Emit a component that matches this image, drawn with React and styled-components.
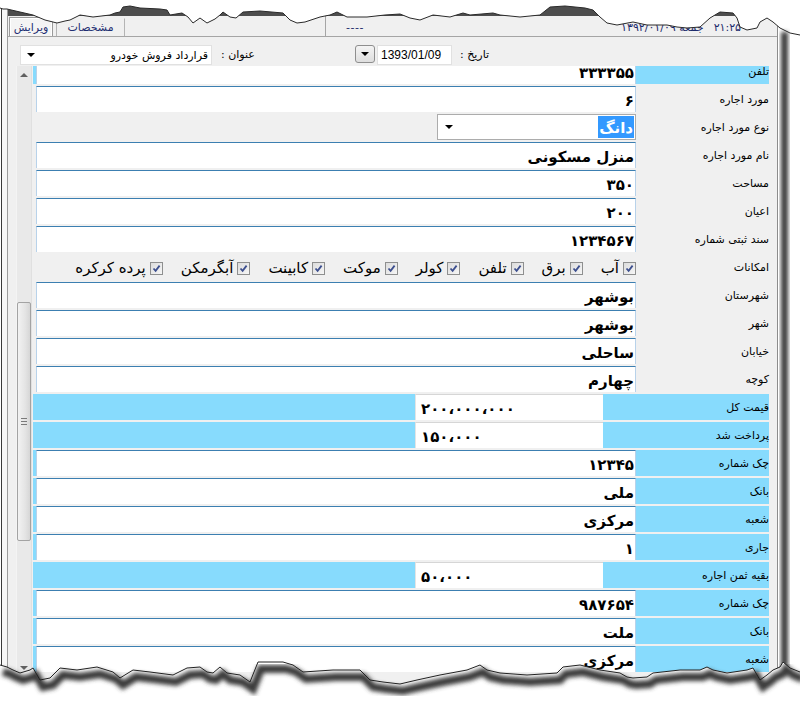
import React from 'react';
import styled, { createGlobalStyle } from 'styled-components';

const GlobalStyle = createGlobalStyle`
  html, body { margin: 0; padding: 0; background: #fff; }
  body { width: 800px; height: 708px; overflow: hidden; font-family: "DejaVu Sans", "Noto Sans", sans-serif; }
  * { box-sizing: border-box; }
`;

const Page = styled.div`
  position: relative;
  width: 800px;
  height: 708px;
  overflow: hidden;
  background: #fff;
`;

const Frame = styled.div`
  margin-left: 1px;
  width: 777px;
  height: 708px;
  border-left: 1px solid #3a3a3a;
  border-right: 1px solid #8c8c8c;
  padding-left: 5px;
  background: #f7f7f7;
  display: flex;
`;

const Inner = styled.div`
  flex: 1;
  border-left: 1px solid #9c9c9c;
  background: #f0f0f0;
  display: flex;
  flex-direction: column;
  min-width: 0;
`;

const TitleBar = styled.div`
  height: 16px;
  flex: none;
  background: #4d4d4d;
`;

const Header = styled.div`
  height: 21px;
  flex: none;
  display: flex;
  border-bottom: 1px solid #a5a5a5;
`;

const Tabs = styled.div`
  width: 317px;
  display: flex;
  align-items: flex-end;
`;

const Tab = styled.div`
  height: ${p => (p.$active ? '19px' : '18px')};
  width: ${p => p.$w}px;
  margin-left: ${p => p.$ml}px;
  font-size: 11px;
  color: #1f2f72;
  display: flex;
  align-items: center;
  justify-content: center;
  direction: rtl;
  border: 1px solid ${p => (p.$active ? '#9a9a9a' : 'transparent')};
  border-left-color: ${p => (p.$active ? '#9a9a9a' : '#b4b4b4')};
  border-right-color: ${p => (p.$active ? '#9a9a9a' : '#b4b4b4')};
  border-bottom: none;
  box-shadow: ${p => (p.$active ? 'inset 1px 1px 0 #fff, inset -1px 0 0 #fff' : 'none')};
  background: ${p => (p.$active ? '#f4f4f4' : 'transparent')};
`;

const Status = styled.div`
  flex: 1;
  border-left: 1px solid #a5a5a5;
  display: flex;
  align-items: center;
  padding-left: 20px;
  padding-right: 36px;
  padding-top: 3px;
  color: #1b2a6b;
  font-size: 11px;
`;

const Dash = styled.span`
  letter-spacing: 0.5px;
`;

const Clock = styled.div`
  margin-left: auto;
  display: flex;
  align-items: center;
  gap: 10px;
  direction: ltr;
`;

const Toolbar = styled.div`
  height: 29px;
  flex: none;
  display: grid;
  grid-template-columns: 12px 192px 143px 20px 2px 75px 8px 1fr;
  align-items: start;
  padding-top: 8px;
  font-size: 11px;
`;

const TitleCombo = styled.div`
  grid-column: 2;
  height: 20px;
  background: #fff;
  border: 1px solid #e1e1e1;
  display: flex;
  align-items: center;
  padding: 0 3px 0 6px;
`;

const ComboText = styled.span`
  margin-left: auto;
  direction: rtl;
  color: #000;
`;

const Arrow = styled.span`
  width: 0;
  height: 0;
  border-left: 4px solid transparent;
  border-right: 4px solid transparent;
  border-top: 4px solid ${p => p.$color || '#000'};
  flex: none;
`;

const ToolLabel = styled.span`
  grid-column: ${p => p.$col};
  direction: rtl;
  justify-self: start;
  padding-left: ${p => p.$pl || 0}px;
  line-height: 20px;
  color: #000;
  white-space: nowrap;
`;

const DateButton = styled.div`
  grid-column: 4;
  height: 18px;
  border: 1px solid #8e8e8e;
  border-radius: 3px;
  background: linear-gradient(#f4f4f4, #dedede);
  display: flex;
  align-items: center;
  justify-content: center;
`;

const DateBox = styled.div`
  grid-column: 6;
  height: 20px;
  background: #fff;
  border: 1px solid #e1e1e1;
  font-family: "Liberation Sans", Arial, sans-serif;
  font-size: 12px;
  line-height: 18px;
  padding-left: 3px;
  color: #000;
`;

const ScrollArea = styled.div`
  height: 610px;
  flex: none;
  display: flex;
  padding-left: 8px;
  overflow: hidden;
`;

const ScrollBar = styled.div`
  width: 16px;
  flex: none;
  background: #e9e9e9;
  border-left: 1px solid #f4f4f4;
  border-right: 1px solid #e0e0e0;
  display: flex;
  flex-direction: column;
  align-items: center;
`;

const ScrollBtn = styled.div`
  height: 17px;
  width: 100%;
  flex: none;
  display: flex;
  align-items: center;
  justify-content: center;
`;

const ScrollArrow = styled.span`
  width: 0;
  height: 0;
  border-left: 4px solid transparent;
  border-right: 4px solid transparent;
  ${p => (p.$up ? 'border-bottom: 4px solid #606060;' : 'border-top: 4px solid #606060;')}
`;

const TrackGap = styled.div`
  height: ${p => (p.$h ? `${p.$h}px` : 'auto')};
  flex: ${p => (p.$h ? 'none' : '1')};
`;

const Thumb = styled.div`
  width: 14px;
  height: 239px;
  flex: none;
  border: 1px solid #a3a3a3;
  border-radius: 2px;
  background: linear-gradient(90deg, #f2f2f2, #e4e4e4 60%, #d6d6d6);
  display: flex;
  flex-direction: column;
  justify-content: center;
  align-items: center;
  gap: 2px;
`;

const Grip = styled.span`
  width: 6px;
  height: 1px;
  background: #7a7a7a;
`;

const Rows = styled.div`
  width: 736px;
  margin-left: 1px;
  margin-top: -8px;
  display: flex;
  flex-direction: column;
  flex: none;
`;

const Row = styled.div`
  height: 26px;
  margin-bottom: 2px;
  flex: none;
  display: flex;
  background: ${p => (p.$blue ? '#87dbfd' : 'transparent')};
`;

const ValueCell = styled.div`
  width: 603px;
  flex: none;
  padding-left: 3px;
  display: flex;
  align-items: stretch;
  justify-content: flex-end;
`;

const LabelCell = styled.div`
  flex: 1;
  display: flex;
  align-items: center;
  justify-content: flex-start;
  direction: rtl;
  font-size: 11px;
  color: #000;
  padding-top: 1px;
  white-space: nowrap;
`;

const TextBox = styled.div`
  width: 600px;
  background: #fff;
  border-top: 1px solid #3c7fb1;
  border-left: 1px solid #b8d2ea;
  border-right: 1px solid #b8d2ea;
  display: flex;
  align-items: center;
  justify-content: flex-start;
  direction: rtl;
  padding-right: 1px;
  padding-top: 2px;
  font-size: 15px;
  font-weight: bold;
  color: #000;
  white-space: nowrap;
`;

const ShortBox = styled.div`
  width: 188px;
  margin-right: 33px;
  background: #fff;
  border-top: 1px solid #d6d6d6;
  border-left: 1px solid #e4e4e4;
  display: flex;
  align-items: center;
  padding-left: 5px;
  padding-top: 2px;
  direction: ltr;
  font-size: 15px;
  font-weight: bold;
  color: #000;
`;

const Combo = styled.div`
  width: 199px;
  background: #fff;
  border: 1px solid #acacac;
  display: flex;
  align-items: center;
  padding: 1px 1px 1px 7px;
`;

const Selected = styled.span`
  margin-left: auto;
  align-self: stretch;
  background: #3399ff;
  color: #fff;
  font-size: 15px;
  font-weight: bold;
  direction: rtl;
  display: flex;
  align-items: center;
  padding: 2px 1px 0;
`;

const CheckGroup = styled.div`
  display: flex;
  align-items: center;
  gap: 18px;
  direction: rtl;
  width: 100%;
  padding-top: 2px;
`;

const CheckItem = styled.label`
  display: flex;
  align-items: center;
  gap: 4px;
  font-size: 15px;
  color: #000;
  white-space: nowrap;
`;

const Box = styled.span`
  width: 13px;
  height: 13px;
  flex: none;
  border: 1px solid #8e8f8f;
  background: linear-gradient(135deg, #dcdcdc, #f6f6f6);
  display: flex;
  align-items: center;
  justify-content: center;
`;

const Overlay = styled.svg`
  position: absolute;
  left: 0;
  top: 0;
  pointer-events: none;
`;

const topPts = [
  [0, 8], [3, 9], [7, 9], [20, 12], [33, 15], [45, 20], [57, 23], [65, 21], [70, 20], [80, 15], [93, 17],
  [110, 15], [115, 13], [120, 12], [123, 7], [130, 6], [140, 8], [160, 9], [167, 10], [170, 15], [182, 13],
  [188, 17], [193, 23], [200, 18], [207, 23], [215, 19], [220, 15], [223, 12], [230, 17], [236, 18], [243, 12],
  [260, 11], [283, 13], [290, 20], [297, 23], [305, 22], [320, 17], [330, 15], [337, 12], [347, 17], [367, 17],
  [385, 15], [400, 14], [410, 18], [420, 20], [433, 15], [450, 17], [463, 13], [470, 15], [493, 13], [500, 15],
  [520, 17], [540, 15], [550, 7], [565, 6], [585, 8], [593, 10], [600, 17], [607, 23], [617, 25], [633, 22],
  [647, 25], [667, 25], [677, 27], [687, 28], [700, 27], [710, 18], [720, 12], [733, 13], [737, 18], [740, 27],
  [747, 30], [757, 28], [760, 22], [767, 18], [773, 22], [780, 28], [790, 33], [800, 35],
];

const bottomPts = [
  [0, 665], [7, 667], [13, 670], [20, 673], [30, 670], [33, 668], [40, 680], [50, 678], [60, 668], [77, 670],
  [97, 667], [113, 672], [120, 678], [133, 670], [150, 672], [173, 675], [187, 668], [200, 667], [207, 672],
  [213, 673], [220, 667], [227, 673], [240, 675], [250, 682], [258, 662], [283, 662], [293, 665], [303, 672],
  [333, 670], [360, 670], [370, 680], [383, 682], [400, 684], [417, 680], [440, 675], [467, 670], [480, 665],
  [487, 670], [500, 673], [527, 675], [557, 673], [563, 667], [580, 665], [600, 670], [620, 673], [627, 677],
  [633, 678], [647, 677], [653, 673], [680, 670], [700, 670], [707, 667], [713, 670], [727, 673], [747, 670],
  [753, 668], [760, 680], [767, 675], [773, 670], [780, 667], [783, 662], [790, 668], [800, 672],
];

const toStr = pts => pts.map(([x, y]) => `${x},${y}`).join(' ');
const shift = (pts, dx, dy) => pts.map(([x, y]) => [x + dx, y + dy]);

const rows = [
  { label: 'تلفن', value: '۳۳۳۳۵۵', blue: true },
  { label: 'مورد اجاره', value: '۶' },
  { label: 'نوع مورد اجاره', type: 'combo', value: 'دانگ' },
  { label: 'نام مورد اجاره', value: 'منزل مسکونی' },
  { label: 'مساحت', value: '۳۵۰' },
  { label: 'اعیان', value: '۲۰۰' },
  { label: 'سند ثبتی شماره', value: '۱۲۳۴۵۶۷' },
  { label: 'امکانات', type: 'checks' },
  { label: 'شهرستان', value: 'بوشهر' },
  { label: 'شهر', value: 'بوشهر' },
  { label: 'خیابان', value: 'ساحلی' },
  { label: 'کوچه', value: 'چهارم' },
  { label: 'قیمت کل', type: 'short', value: '۲۰۰،۰۰۰،۰۰۰', blue: true },
  { label: 'پرداخت شد', type: 'short', value: '۱۵۰،۰۰۰', blue: true },
  { label: 'چک شماره', value: '۱۲۳۴۵', blue: true },
  { label: 'بانک', value: 'ملی', blue: true },
  { label: 'شعبه', value: 'مرکزی', blue: true },
  { label: 'جاری', value: '۱', blue: true },
  { label: 'بقیه ثمن اجاره', type: 'short', value: '۵۰،۰۰۰', blue: true },
  { label: 'چک شماره', value: '۹۸۷۶۵۴', blue: true },
  { label: 'بانک', value: 'ملت', blue: true },
  { label: 'شعبه', value: 'مرکزی', blue: true },
];

const facilities = ['آب', 'برق', 'تلفن', 'کولر', 'موکت', 'کابینت', 'آبگرمکن', 'پرده کرکره'];

function CheckMark() {
  return (
    <svg width="9" height="9" viewBox="0 0 9 9">
      <path d="M1.5 4.5 L3.6 6.8 L7.6 1.6" fill="none" stroke="#3d4f8e" strokeWidth="1.8" />
    </svg>
  );
}

function Value({ row }) {
  if (row.type === 'combo') {
    return (
      <Combo>
        <Arrow />
        <Selected>{row.value}</Selected>
      </Combo>
    );
  }
  if (row.type === 'checks') {
    return (
      <CheckGroup>
        {facilities.map(f => (
          <CheckItem key={f}>
            <Box><CheckMark /></Box>
            <span>{f}</span>
          </CheckItem>
        ))}
      </CheckGroup>
    );
  }
  if (row.type === 'short') {
    return <ShortBox>{row.value}</ShortBox>;
  }
  return <TextBox>{row.value}</TextBox>;
}

export default function App() {
  return (
    <Page>
      <GlobalStyle />
      <Frame>
        <Inner>
          <TitleBar />
          <Header>
            <Tabs>
              <Tab $active $w={44} $ml={1}>ویرایش</Tab>
              <Tab $w={69} $ml={3}>مشخصات</Tab>
            </Tabs>
            <Status>
              <Dash>----</Dash>
              <Clock>
                <span>۱۳۹۲/۰۱/۰۹ جمعه</span>
                <span>۲۱:۲۵</span>
              </Clock>
            </Status>
          </Header>
          <Toolbar>
            <TitleCombo>
              <Arrow />
              <ComboText>قرارداد فروش خودرو</ComboText>
            </TitleCombo>
            <ToolLabel $col={3} $pl={9}>عنوان :</ToolLabel>
            <DateButton><Arrow /></DateButton>
            <DateBox>1393/01/09</DateBox>
            <ToolLabel $col={8}>تاریخ :</ToolLabel>
          </Toolbar>
          <ScrollArea>
            <ScrollBar>
              <ScrollBtn><ScrollArrow $up /></ScrollBtn>
              <TrackGap $h={219} />
              <Thumb><Grip /><Grip /><Grip /></Thumb>
              <TrackGap />
              <ScrollBtn><ScrollArrow /></ScrollBtn>
            </ScrollBar>
            <Rows>
              {rows.map((r, i) => (
                <Row key={i} $blue={r.blue}>
                  <ValueCell><Value row={r} /></ValueCell>
                  <LabelCell>{r.label}</LabelCell>
                </Row>
              ))}
            </Rows>
          </ScrollArea>
        </Inner>
      </Frame>
      <Overlay width="800" height="708" viewBox="0 0 800 708">
        <defs>
          <filter id="soft" x="-20%" y="-20%" width="140%" height="140%">
            <feGaussianBlur stdDeviation="2" />
          </filter>
        </defs>
        <polygon points={`${toStr(topPts)} 800,0 0,0`} fill="#fff" />
        <polyline points={toStr(topPts)} fill="none" stroke="#2a2a2a" strokeWidth="1" />
        <rect x="781" y="32" width="7" height="640" fill="#3a3a3a" filter="url(#soft)" />
        <polygon points={`${toStr(bottomPts)} 800,708 0,708`} fill="#fff" />
        <polyline points={toStr(shift(bottomPts, 3, 7))} fill="none" stroke="#3a3a3a" strokeWidth="8" filter="url(#soft)" />
        <polyline points={toStr(bottomPts)} fill="none" stroke="#222" strokeWidth="1" />
      </Overlay>
    </Page>
  );
}
